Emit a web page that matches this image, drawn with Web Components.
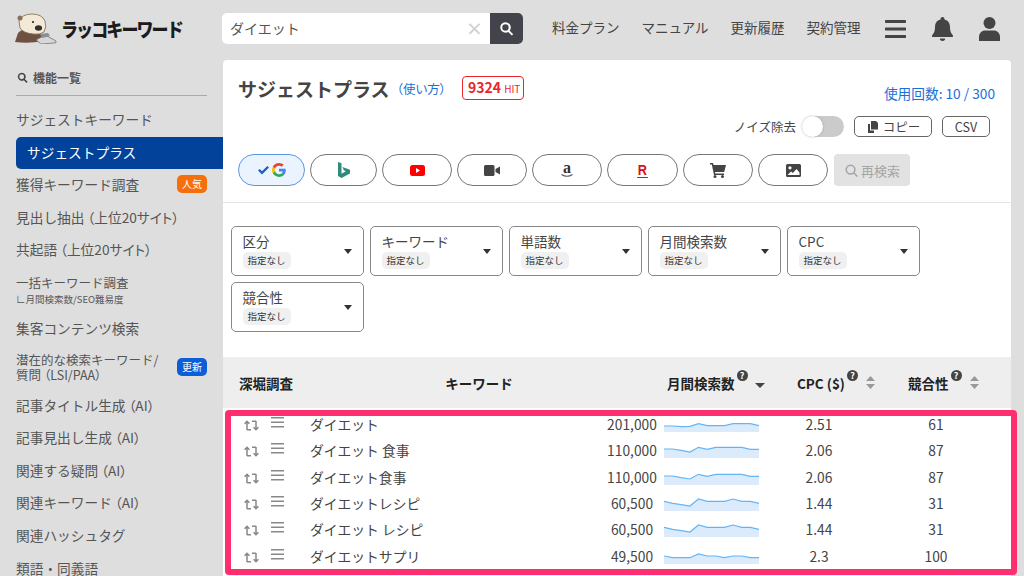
<!DOCTYPE html>
<html lang="ja">
<head>
<meta charset="utf-8">
<title>ラッコキーワード</title>
<style>
    html, body { margin: 0; height: 576px; overflow: hidden; background: #dedede; }
    body { font-family: "Noto Sans CJK JP", "Noto Sans", sans-serif; color: #444; }
    #app { display: grid; grid-template-columns: 223px 788px; grid-template-rows: 60px 516px; height: 576px; }
    rakko-topbar { grid-column: 1 / 3; }
</style>
</head>
<body>
<div id="app">
    <rakko-topbar></rakko-topbar>
    <rakko-sidebar>
        <rakko-nav-item h="33">サジェストキーワード</rakko-nav-item>
        <rakko-nav-item active h="32">サジェストプラス</rakko-nav-item>
        <rakko-nav-item badge="人気" color="#f5700a">獲得キーワード調査</rakko-nav-item>
        <rakko-nav-item>見出し抽出<span>（上位20サイト）</span></rakko-nav-item>
        <rakko-nav-item>共起語<span>（上位20サイト）</span></rakko-nav-item>
        <rakko-nav-item h="46" small sub="∟月間検索数/SEO難易度">一括キーワード調査</rakko-nav-item>
        <rakko-nav-item>集客コンテンツ検索</rakko-nav-item>
        <rakko-nav-item h="44" small badge="更新" color="#0b5ed7">潜在的な検索キーワード/<br>質問<span>（LSI/PAA）</span></rakko-nav-item>
        <rakko-nav-item>記事タイトル生成<span>（AI）</span></rakko-nav-item>
        <rakko-nav-item>記事見出し生成<span>（AI）</span></rakko-nav-item>
        <rakko-nav-item>関連する疑問<span>（AI）</span></rakko-nav-item>
        <rakko-nav-item>関連キーワード<span>（AI）</span></rakko-nav-item>
        <rakko-nav-item>関連ハッシュタグ</rakko-nav-item>
        <rakko-nav-item>類語・同義語</rakko-nav-item>
    </rakko-sidebar>
    <rakko-panel>
        <rakko-panel-head></rakko-panel-head>
        <rakko-filters>
            <rakko-filter>区分</rakko-filter>
            <rakko-filter>キーワード</rakko-filter>
            <rakko-filter>単語数</rakko-filter>
            <rakko-filter>月間検索数</rakko-filter>
            <rakko-filter>CPC</rakko-filter>
            <rakko-filter>競合性</rakko-filter>
        </rakko-filters>
        <rakko-table-head></rakko-table-head>
        <rakko-row vol="201,000" cpc="2.51" comp="61" spark="6,6,5.3,5.7,8.3,6.3,6.3,6.3,8.3,8.3,8.3,6.3">ダイエット</rakko-row>
        <rakko-row vol="110,000" cpc="2.06" comp="87" spark="9,9,7.7,6,10.7,8.7,10.7,10.7,10.7,10.7,8.7,8.7">ダイエット 食事</rakko-row>
        <rakko-row vol="110,000" cpc="2.06" comp="87" spark="9,9,7.3,6,10.7,8.7,10.7,10.7,10.7,10.7,8.7,8.7">ダイエット食事</rakko-row>
        <rakko-row vol="60,500" cpc="1.44" comp="31" spark="9.7,7.7,6.3,5,12,9.7,9.7,9.7,12,9.7,9.7,7.7">ダイエットレシピ</rakko-row>
        <rakko-row vol="60,500" cpc="1.44" comp="31" spark="9.7,7.7,6.3,5,12,9.7,9.7,9.7,12,9.7,9.7,7.7">ダイエット レシピ</rakko-row>
        <rakko-row vol="49,500" cpc="2.3" comp="100" spark="8,6.3,6.3,6.3,10,8,8,6.3,8,8,6.3,6.3">ダイエットサプリ</rakko-row>
    </rakko-panel>
</div>
<rakko-highlight></rakko-highlight>

<script>
const SEARCH_ICON = `<path d="M10.5 3a7.5 7.5 0 0 1 6 12l5 5-2 2-5-5A7.5 7.5 0 1 1 10.5 3zm0 3a4.5 4.5 0 1 0 0 9 4.5 4.5 0 0 0 0-9z"/>`;

class RakkoTopbar extends HTMLElement {
    constructor() {
        super();
        this.attachShadow({ mode: "open" });
        this.shadowRoot.innerHTML = `
            <style>
                :host { display: flex; align-items: center; height: 60px; padding: 0 0 3px 15px; box-sizing: border-box; }
                .logo { display: flex; align-items: center; width: 207px; flex: none; }
                .logo b { font-size: 17px; font-weight: 900; color: #1c1c1c; margin-left: 4px; letter-spacing: -1.9px; transform: scaleY(1.12); }
                .search { display: flex; width: 301px; height: 31px; flex: none; background: #fff; border-radius: 5px; overflow: hidden; }
                .search span { flex: 1; padding-left: 8px; font-size: 14px; line-height: 31px; color: #555; }
                .search i { width: 31px; color: #d0d0d0; font: 20px/30px "DejaVu Sans", sans-serif; text-align: center; }
                .search div { width: 33px; background: #42434b; display: flex; align-items: center; justify-content: center; }
                nav { display: flex; margin: 0 0 3px 29px; gap: 22px; font-size: 13.5px; color: #444; white-space: nowrap; }
                .icons { display: flex; align-items: center; margin-left: 24px; gap: 26px; }
                svg { display: block; fill: currentColor; }
            </style>
            <div class="logo">
                <svg width="42" height="31" viewBox="0 0 42 31">
                    <path d="M0 29 L3 20 Q7 16 13 15 L27 21 L28 28 Q14 31 0 29z" fill="#6e5140"/>
                    <path d="M4 8 Q7 1 17 1 Q27 1 30 8 Q32 14 29 19 Q25 22 18 21 Q8 20 5 15z" fill="#f3e9d6" stroke="#7a6450" stroke-width=".8"/>
                    <ellipse cx="5" cy="5" rx="2.500" ry="2.500" fill="#8a7058"/>
                    <circle cx="18" cy="9" r="1.100" fill="#222"/>
                    <ellipse cx="23.500" cy="15" rx="3.600" ry="2.800" fill="#35302d"/>
                    <path d="M21 27 L30 22 L41 28 Q42 30 39 30 L26 31z" fill="#d5d8d9" stroke="#666" stroke-width=".7"/>
                    <path d="M25 21 L33 20 L35 23 L27 25z" fill="#8b8e90"/>
                </svg>
                <b>ラッコキーワード</b>
            </div>
            <div class="search">
                <span>ダイエット</span>
                <i>×</i>
                <div><svg width="17" height="17" viewBox="0 0 24 24" style="color:#fff">${SEARCH_ICON}</svg></div>
            </div>
            <nav><span>料金プラン</span><span>マニュアル</span><span>更新履歴</span><span>契約管理</span></nav>
            <div class="icons">
                <svg width="21" height="18" viewBox="0 0 21 18"><path d="M1 0h19a1 1 0 0 1 1 1.500 1 1 0 0 1-1 1.500H1A1 1 0 0 1 0 1.500 1 1 0 0 1 1 0zm0 7.500h19a1.500 1.500 0 0 1 0 3H1a1.500 1.500 0 0 1 0-3zM1 15h19a1.500 1.500 0 0 1 0 3H1a1.500 1.500 0 0 1 0-3z"/></svg>
                <svg width="21" height="24" viewBox="0 0 21 24"><path d="M10.500 0a2 2 0 0 1 2 2v.6c3.800.9 5.500 4 5.500 7.400 0 5 1.500 6.500 3 8.500.3.500 0 1.500-1 1.500H1c-1 0-1.300-1-1-1.500 1.500-2 3-3.500 3-8.500 0-3.400 1.700-6.500 5.500-7.400V2a2 2 0 0 1 2-2zM7.800 21.500h5.400a2.700 2.500 0 0 1-5.400 0z"/></svg>
                <svg width="21" height="24" viewBox="0 0 21 24"><circle cx="10.500" cy="6" r="6"/><path d="M0 24v-4c0-4 3-6.500 6-6.500h9c3 0 6 2.500 6 6.500v4z"/></svg>
            </div>
        `;
    }
}

class RakkoSidebar extends HTMLElement {
    constructor() {
        super();
        this.attachShadow({ mode: "open" });
        this.shadowRoot.innerHTML = `
            <style>
                :host { display: block; overflow: hidden; height: 516px; }
                .title { display: flex; align-items: center; gap: 4px; margin: 0 16px; height: 36px; border-bottom: 1px solid #aaa; font-size: 12px; font-weight: 700; color: #555; box-sizing: border-box; }
                .title svg { fill: #444; }
                .items { padding-top: 7px; }
            </style>
            <div class="title"><svg width="13" height="13" viewBox="0 0 24 24">${SEARCH_ICON}</svg>機能一覧</div>
            <div class="items"><slot></slot></div>
        `;
    }
}

class RakkoNavItem extends HTMLElement {
    constructor() {
        super();
        this.attachShadow({ mode: "open" });
    }
    connectedCallback() {
        const h = this.getAttribute("h") || "32.6";
        const sub = this.getAttribute("sub");
        const badge = this.getAttribute("badge");
        this.shadowRoot.innerHTML = `
            <style>
                :host { display: flex; align-items: center; justify-content: space-between; height: ${h}px; margin-left: 16px; padding: 0 16px 2px 0; font-size: 13.700px; color: #555; white-space: nowrap; box-sizing: border-box; }
                :host([small]) { font-size: 12.500px; line-height: 15.500px; padding-bottom: 0; }
                :host([active]) { margin-top: 1px; background: #02429a; color: #fff; padding: 0 0 3px 11px; border-radius: 5px 0 0 5px; }
                ::slotted(span) { font-feature-settings: "palt"; margin-left: 3px; }
                small { display: block; font-size: 9.500px; line-height: 12px; margin-top: 3px; font-feature-settings: "palt"; }
                em { font-style: normal; font-size: 10px; color: #fff; line-height: 18px; padding: 0 5px; border-radius: 5px; background: ${this.getAttribute("color") || "none"}; }
            </style>
            <div><slot></slot>${sub ? `<small>${sub}</small>` : ""}</div>
            ${badge ? `<em>${badge}</em>` : ""}
        `;
    }
}

class RakkoPanel extends HTMLElement {
    constructor() {
        super();
        this.attachShadow({ mode: "open" });
        this.shadowRoot.innerHTML = `
            <style>
                :host { display: block; height: 516px; background: #fff; border-radius: 4px 4px 0 0; overflow: hidden; }
            </style>
            <slot></slot>
        `;
    }
}

class RakkoPill extends HTMLElement {
    constructor() {
        super();
        this.attachShadow({ mode: "open" });
        this.shadowRoot.innerHTML = `
            <style>
                :host { display: flex; align-items: center; justify-content: center; gap: 3px; box-sizing: border-box; height: 32px; border: 1.500px solid #777; border-radius: 16px; background: #fff; }
                :host([active]) { border-color: #5b94e6; background: #ebf3fe; }
            </style>
            <slot></slot>
        `;
    }
}

class RakkoPanelHead extends HTMLElement {
    constructor() {
        super();
        this.attachShadow({ mode: "open" });
        this.shadowRoot.innerHTML = `
            <style>
                :host { display: block; height: 143px; box-sizing: border-box; padding: 14px 16px 0 15px; border-bottom: 1px solid #e4e4e4; }
                .top { display: flex; align-items: center; height: 28px; white-space: nowrap; }
                h1 { margin: 0; font-size: 19px; font-weight: 700; color: #444; }
                .how { font-size: 12.500px; font-feature-settings: "palt"; color: #1a6fd8; margin-left: 7px; }
                .hit { margin-left: 16px; border: 1px solid #e8262b; border-radius: 4px; color: #e8262b; font-size: 14px; font-weight: 700; line-height: 20px; padding: 0 3px 0 5px; }
                .hit span { font-size: 10px; font-weight: 400; }
                .usage { margin-left: auto; font-size: 13.700px; color: #1a6fd8; padding-top: 10px; }
                .tools { display: flex; align-items: center; justify-content: flex-end; height: 21px; margin-top: 14px; padding-right: 5px; font-size: 12.500px; color: #444; }
                .switch { width: 42px; height: 21px; margin: 0 10px 0 6px; border-radius: 11px; background: #cbcbcb; display: flex; }
                .switch i { width: 21px; height: 21px; border-radius: 50%; background: #fff; box-shadow: 0 0 3px #0003; }
                button { display: flex; align-items: center; justify-content: center; gap: 5px; height: 21px; box-sizing: border-box; border: 1.500px solid #666; border-radius: 5px; background: #fff; font: inherit; color: #444; padding: 0; }
                .pills { display: grid; grid-template-columns: 67px 67px 70px 70px 70px 71px 70px 70px 77px; gap: 5px; margin-top: 17px; }
                .again { display: flex; align-items: center; justify-content: center; gap: 2px; height: 32px; border-radius: 4px; background: #e2e2e2; color: #a5a5a5; font-size: 13px; margin-left: 1px; }
                svg { display: block; fill: currentColor; }
                .a { font: 700 16px/1 "Liberation Serif", serif; color: #333; position: relative; top: -2px; }
                .r { display: flex; flex-direction: column; align-items: center; font: 700 15px/15px "Liberation Sans", sans-serif; color: #d6101c; }
                .r span { display: block; transform: scaleX(.85); }
                .r i { display: block; width: 11px; height: 1.500px; background: #d6101c; border-radius: 2px; }
            </style>
            <div class="top">
                <h1>サジェストプラス</h1>
                <span class="how">（使い方）</span>
                <span class="hit">9324 <span>HIT</span></span>
                <span class="usage">使用回数: 10 / 300</span>
            </div>
            <div class="tools">
                <span>ノイズ除去</span>
                <div class="switch"><i></i></div>
                <button style="width:78px"><svg width="12" height="12" viewBox="0 0 12 12"><path d="M5 0h5l2 2v6.500H5zM2 3h2v6.500h4V12H2z"/></svg>コピー</button>
                <button style="width:48px;margin-left:10px">CSV</button>
            </div>
            <div class="pills">
                <rakko-pill active>
                    <svg width="11" height="9" viewBox="0 0 11 9" style="color:#1a62c4"><path d="M0 4.500 1.700 3l2.300 2.300L9.300 0 11 1.500 4 8.500z"/></svg>
                    <svg width="14" height="14" viewBox="0 0 48 48"><path fill="#ea4335" d="M24 9.500c3.500 0 6.700 1.200 9.200 3.600l6.900-6.900C35.900 2.400 30.500 0 24 0 14.600 0 6.500 5.400 2.600 13.200l8 6.200C12.400 13.700 17.700 9.500 24 9.500z"/><path fill="#4285f4" d="M47 24.500c0-1.600-.1-3.100-.4-4.500H24v9h12.900c-.6 3-2.200 5.500-4.700 7.200l7.700 6C44.400 37.800 47 31.700 47 24.500z"/><path fill="#fbbc05" d="M10.500 28.600c-.5-1.400-.8-3-.8-4.600s.3-3.200.8-4.600l-8-6.200C1 16.500 0 20.100 0 24s1 7.500 2.600 10.800z"/><path fill="#34a853" d="M24 48c6.500 0 11.900-2.100 15.900-5.800l-7.700-6c-2.200 1.400-4.900 2.300-8.200 2.300-6.300 0-11.600-4.200-13.500-10l-8 6.200C6.500 42.600 14.600 48 24 48z"/></svg>
                </rakko-pill>
                <rakko-pill><svg width="12" height="16" viewBox="0 0 12 16" style="color:#2f8a7c"><path d="M0 0l3.500 1.200v10.500l4.300-2.500-2-1L4.400 5l7.600 2.700v3.700L3.500 16 0 14z"/></svg></rakko-pill>
                <rakko-pill><svg width="15" height="11" viewBox="0 0 15 11"><rect width="15" height="11" rx="2.500" fill="#f00"/><path d="M6 3l4 2.500L6 8z" fill="#fff"/></svg></rakko-pill>
                <rakko-pill><svg width="16" height="11" viewBox="0 0 16 11" style="color:#444"><rect width="10.500" height="11" rx="1.500"/><path d="M11.500 4l4.500-2.500v8L11.500 7z"/></svg></rakko-pill>
                <rakko-pill><div style="display:flex;flex-direction:column;align-items:center">
                    <span class="a">a</span>
                    <svg width="12" height="4" viewBox="0 0 12 4" style="margin-top:-4px"><path d="M.500 .500Q6 4 11.500 .500" fill="none" stroke="#555" stroke-width="1.200"/></svg>
                </div></rakko-pill>
                <rakko-pill><div class="r"><span>R</span><i></i></div></rakko-pill>
                <rakko-pill><svg width="16" height="15" viewBox="0 0 16 15" style="color:#444"><path d="M0 0h3l.6 2H16l-1.800 7H5l.3 1.500H14V12H4L1.800 1.500H0z"/><circle cx="5" cy="13.500" r="1.500"/><circle cx="12.500" cy="13.500" r="1.500"/></svg></rakko-pill>
                <rakko-pill><svg width="15" height="13" viewBox="0 0 15 13" style="color:#444"><path fill-rule="evenodd" d="M1.500 0h12A1.500 1.500 0 0 1 15 1.500v10a1.500 1.500 0 0 1-1.500 1.500h-12A1.500 1.500 0 0 1 0 11.500v-10A1.500 1.500 0 0 1 1.500 0zM4 2.200a1.600 1.600 0 1 0 0 3.200 1.600 1.600 0 0 0 0-3.200zM1.500 11h12V8.500L10.500 5 6.800 9 5 7.500z"/></svg></rakko-pill>
                <div class="again"><svg width="15" height="15" viewBox="0 0 24 24" style="fill:none" stroke="#a5a5a5" stroke-width="2.400"><circle cx="10.500" cy="10.500" r="7"/><path d="M15.500 15.500l6 6"/></svg>再検索</div>
            </div>
        `;
    }
}

class RakkoFilters extends HTMLElement {
    constructor() {
        super();
        this.attachShadow({ mode: "open" });
        this.shadowRoot.innerHTML = `
            <style>
                :host { display: grid; grid-template-columns: repeat(5, 133px); gap: 6px; align-content: start; height: 154px; box-sizing: border-box; padding: 23px 0 0 8px; }
            </style>
            <slot></slot>
        `;
    }
}

class RakkoFilter extends HTMLElement {
    constructor() {
        super();
        this.attachShadow({ mode: "open" });
        this.shadowRoot.innerHTML = `
            <style>
                :host { display: flex; align-items: center; justify-content: space-between; height: 50px; box-sizing: border-box; padding: 0 11px 0 10.500px; border: 1.200px solid #888; border-radius: 5px; font-size: 13.500px; color: #444; }
                .label { line-height: 17px; }
                .chip { display: block; width: fit-content; margin-top: 2px; padding: 0 5px; background: #f0f0f0; border-radius: 5px; font-size: 9.500px; line-height: 17px; color: #333; }
                i { width: 0; height: 0; border: 4px solid transparent; border-top: 5px solid #333; border-bottom: 0; }
            </style>
            <div class="label"><slot></slot><span class="chip">指定なし</span></div>
            <i></i>
        `;
    }
}

class RakkoTableHead extends HTMLElement {
    constructor() {
        super();
        this.attachShadow({ mode: "open" });
        const help = `<sup></sup>`;
        const sort = `<svg class="sort" width="9" height="13" viewBox="0 0 9 13"><path d="M4.500 0L9 5H0zM0 8h9l-4.500 5z"/></svg>`;
        this.shadowRoot.innerHTML = `
            <style>
                :host { display: grid; grid-template-columns: 71px 338px 137px 111px 110px; align-items: center; height: 51px; margin-bottom: 3px; padding-left: 16px; background: #eee; font-size: 13.500px; font-weight: 700; color: #222; white-space: nowrap; }
                .c { display: flex; align-items: center; }
                sup { display: block; width: 11px; height: 11px; margin: -14px 0 0 2px; border-radius: 50%; background: #444; color: #fff; font-size: 9px; line-height: 11px; text-align: center; }
                sup::before { content: "?"; }
                .sort { fill: #999; margin-left: 8px; }
                .caret { width: 0; height: 0; margin: 5px 0 0 7px; border: 5px solid transparent; border-top: 5px solid #444; border-bottom: 0; }
            </style>
            <div>深堀調査</div>
            <div style="text-align:center">キーワード</div>
            <div class="c" style="padding-left:19px">月間検索数${help}<span class="caret"></span></div>
            <div class="c" style="padding-left:12px">CPC ($)${help}${sort}</div>
            <div class="c" style="padding-left:12px">競合性${help}${sort}</div>
        `;
    }
}

class RakkoSpark extends HTMLElement {
    constructor() {
        super();
        this.attachShadow({ mode: "open" });
    }
    connectedCallback() {
        const vals = this.getAttribute("values").split(",").map(Number);
        const step = 95 / (vals.length - 1);
        const pts = vals.map((v, i) => `${(i * step).toFixed(1)},${(21 - v).toFixed(1)}`).join(" ");
        this.shadowRoot.innerHTML = `
            <style>
                :host { display: block; height: 21px; }
                svg { display: block; }
            </style>
            <svg width="95" height="21" viewBox="0 0 95 21">
                <polygon points="0,21 ${pts} 95,21" fill="#dcebfb"/>
                <polyline points="${pts}" fill="none" stroke="#64b5f6" stroke-width="1.200"/>
            </svg>
        `;
    }
}

class RakkoRow extends HTMLElement {
    constructor() {
        super();
        this.attachShadow({ mode: "open" });
    }
    connectedCallback() {
        this.shadowRoot.innerHTML = `
            <style>
                :host { display: grid; grid-template-columns: 71px 290px 64px 96px 118px 116px; height: 26.330px; padding-left: 16px; font-size: 13.800px; line-height: 26px; color: #444; white-space: nowrap; }
                .act { display: flex; gap: 12px; padding: 6px 0 0 5px; box-sizing: border-box; align-items: flex-start; }
                .n { text-align: center; }
                svg { display: block; }
            </style>
            <div class="act">
                <svg width="15" height="11" viewBox="0 0 15 11" style="margin-top:3px" fill="none" stroke="#888" stroke-width="1.500"><path d="M3 10V1.500M.6 3.800L3 1.300 5.400 3.800M3 9.800H7M12 1v8.500M9.600 7.200L12 9.700 14.400 7.200M12 1.200H8"/></svg>
                <svg width="13" height="11" viewBox="0 0 13 11" fill="#888"><path d="M0 0h13v1.500H0zM0 4.500h13V6H0zM0 9h13v1.500H0z"/></svg>
            </div>
            <div><slot></slot></div>
            <div class="n">${this.getAttribute("vol")}</div>
            <rakko-spark values="${this.getAttribute("spark")}"></rakko-spark>
            <div class="n">${this.getAttribute("cpc")}</div>
            <div class="n">${this.getAttribute("comp")}</div>
        `;
    }
}

// marker drawn over the table in the screenshot
class RakkoHighlight extends HTMLElement {
    constructor() {
        super();
        this.attachShadow({ mode: "open" });
        this.shadowRoot.innerHTML = `
            <style>
                :host { position: absolute; left: 225px; top: 410px; width: 792px; height: 165px; box-sizing: border-box; border: 6px solid #ff2e6e; border-radius: 4px; }
            </style>
        `;
    }
}

customElements.define("rakko-topbar", RakkoTopbar);
customElements.define("rakko-sidebar", RakkoSidebar);
customElements.define("rakko-nav-item", RakkoNavItem);
customElements.define("rakko-panel", RakkoPanel);
customElements.define("rakko-pill", RakkoPill);
customElements.define("rakko-panel-head", RakkoPanelHead);
customElements.define("rakko-filters", RakkoFilters);
customElements.define("rakko-filter", RakkoFilter);
customElements.define("rakko-table-head", RakkoTableHead);
customElements.define("rakko-spark", RakkoSpark);
customElements.define("rakko-row", RakkoRow);
customElements.define("rakko-highlight", RakkoHighlight);
</script>
</body>
</html>
